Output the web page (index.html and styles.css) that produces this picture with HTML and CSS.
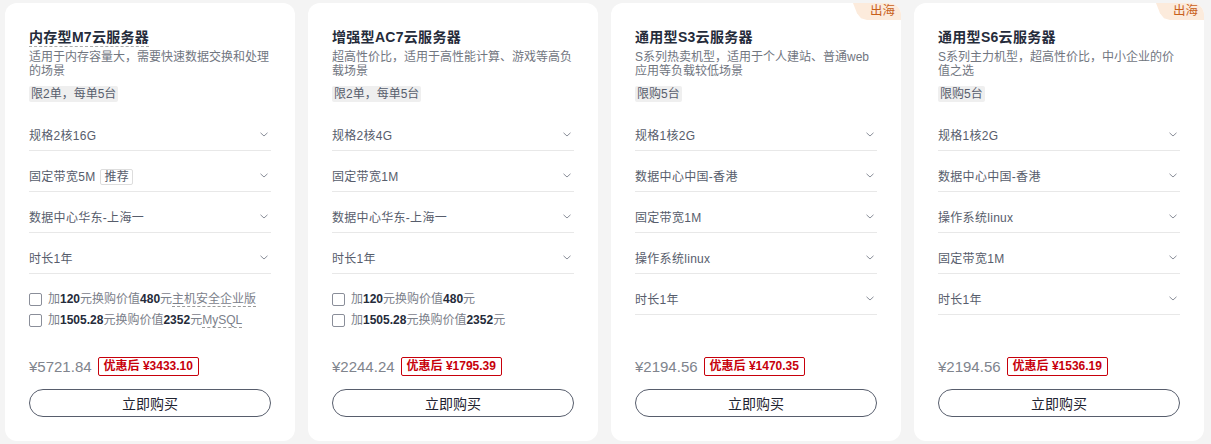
FILE: index.html
```html
<!DOCTYPE html>
<html lang="zh-CN">
<head>
<meta charset="utf-8">
<title>云服务器</title>
<link rel="stylesheet" href="styles.css">
</head>
<body>
<div class="cards">
  <div class="card">
    <div class="title"><span class="dashed">内存型M7云服务器</span></div>
    <div class="desc">适用于内存容量大，需要快速数据交换和处理的场景</div>
    <div class="tag-row"><span class="tag">限2单，每单5台</span></div>
    <div class="opts">
      <div class="opt"><span class="label">规格2核16G</span><svg class="chev" viewBox="0 0 8 5"><path d="M0.5 0.8 L4 4 L7.5 0.8"/></svg></div>
      <div class="opt"><span class="label">固定带宽5M<span class="rec">推荐</span></span><svg class="chev" viewBox="0 0 8 5"><path d="M0.5 0.8 L4 4 L7.5 0.8"/></svg></div>
      <div class="opt"><span class="label">数据中心华东-上海一</span><svg class="chev" viewBox="0 0 8 5"><path d="M0.5 0.8 L4 4 L7.5 0.8"/></svg></div>
      <div class="opt"><span class="label">时长1年</span><svg class="chev" viewBox="0 0 8 5"><path d="M0.5 0.8 L4 4 L7.5 0.8"/></svg></div>
    </div>
    <div class="checks">
      <label class="check"><span class="box"></span>加<b>120</b>元换购价值<b>480</b>元<span class="dash-u">主机安全企业版</span></label>
      <label class="check"><span class="box"></span>加<b>1505.28</b>元换购价值<b>2352</b>元<span class="dash-u">MySQL</span></label>
    </div>
    <div class="price-row"><span class="orig">¥5721.84</span><span class="disc">优惠后 ¥3433.10</span></div>
    <button class="buy">立即购买</button>
  </div>

  <div class="card">
    <div class="title"><span>增强型AC7云服务器</span></div>
    <div class="desc">超高性价比，适用于高性能计算、游戏等高负载场景</div>
    <div class="tag-row"><span class="tag">限2单，每单5台</span></div>
    <div class="opts">
      <div class="opt"><span class="label">规格2核4G</span><svg class="chev" viewBox="0 0 8 5"><path d="M0.5 0.8 L4 4 L7.5 0.8"/></svg></div>
      <div class="opt"><span class="label">固定带宽1M</span><svg class="chev" viewBox="0 0 8 5"><path d="M0.5 0.8 L4 4 L7.5 0.8"/></svg></div>
      <div class="opt"><span class="label">数据中心华东-上海一</span><svg class="chev" viewBox="0 0 8 5"><path d="M0.5 0.8 L4 4 L7.5 0.8"/></svg></div>
      <div class="opt"><span class="label">时长1年</span><svg class="chev" viewBox="0 0 8 5"><path d="M0.5 0.8 L4 4 L7.5 0.8"/></svg></div>
    </div>
    <div class="checks">
      <label class="check"><span class="box"></span>加<b>120</b>元换购价值<b>480</b>元</label>
      <label class="check"><span class="box"></span>加<b>1505.28</b>元换购价值<b>2352</b>元</label>
    </div>
    <div class="price-row"><span class="orig">¥2244.24</span><span class="disc">优惠后 ¥1795.39</span></div>
    <button class="buy">立即购买</button>
  </div>

  <div class="card">
    <span class="corner">出海</span>
    <div class="title"><span>通用型S3云服务器</span></div>
    <div class="desc">S系列热卖机型，适用于个人建站、普通web应用等负载较低场景</div>
    <div class="tag-row"><span class="tag">限购5台</span></div>
    <div class="opts">
      <div class="opt"><span class="label">规格1核2G</span><svg class="chev" viewBox="0 0 8 5"><path d="M0.5 0.8 L4 4 L7.5 0.8"/></svg></div>
      <div class="opt"><span class="label">数据中心中国-香港</span><svg class="chev" viewBox="0 0 8 5"><path d="M0.5 0.8 L4 4 L7.5 0.8"/></svg></div>
      <div class="opt"><span class="label">固定带宽1M</span><svg class="chev" viewBox="0 0 8 5"><path d="M0.5 0.8 L4 4 L7.5 0.8"/></svg></div>
      <div class="opt"><span class="label">操作系统linux</span><svg class="chev" viewBox="0 0 8 5"><path d="M0.5 0.8 L4 4 L7.5 0.8"/></svg></div>
      <div class="opt"><span class="label">时长1年</span><svg class="chev" viewBox="0 0 8 5"><path d="M0.5 0.8 L4 4 L7.5 0.8"/></svg></div>
    </div>
    <div class="price-row"><span class="orig">¥2194.56</span><span class="disc">优惠后 ¥1470.35</span></div>
    <button class="buy">立即购买</button>
  </div>

  <div class="card">
    <span class="corner">出海</span>
    <div class="title"><span>通用型S6云服务器</span></div>
    <div class="desc">S系列主力机型，超高性价比，中小企业的价值之选</div>
    <div class="tag-row"><span class="tag">限购5台</span></div>
    <div class="opts">
      <div class="opt"><span class="label">规格1核2G</span><svg class="chev" viewBox="0 0 8 5"><path d="M0.5 0.8 L4 4 L7.5 0.8"/></svg></div>
      <div class="opt"><span class="label">数据中心中国-香港</span><svg class="chev" viewBox="0 0 8 5"><path d="M0.5 0.8 L4 4 L7.5 0.8"/></svg></div>
      <div class="opt"><span class="label">操作系统linux</span><svg class="chev" viewBox="0 0 8 5"><path d="M0.5 0.8 L4 4 L7.5 0.8"/></svg></div>
      <div class="opt"><span class="label">固定带宽1M</span><svg class="chev" viewBox="0 0 8 5"><path d="M0.5 0.8 L4 4 L7.5 0.8"/></svg></div>
      <div class="opt"><span class="label">时长1年</span><svg class="chev" viewBox="0 0 8 5"><path d="M0.5 0.8 L4 4 L7.5 0.8"/></svg></div>
    </div>
    <div class="price-row"><span class="orig">¥2194.56</span><span class="disc">优惠后 ¥1536.19</span></div>
    <button class="buy">立即购买</button>
  </div>
</div>
</body>
</html>
```
FILE: styles.css
```css
html, body {
  margin: 0;
  padding: 0;
  background: #f4f4f4;
}
body {
  font-family: "Liberation Sans", "Noto Sans CJK SC", sans-serif;
  color: #575d6c;
}
.cards {
  display: flex;
  gap: 13px;
  padding: 3px 0 0 5px;
}
.card {
  position: relative;
  width: 290px;
  height: 438px;
  box-sizing: border-box;
  background: #fff;
  border-radius: 12px;
  padding: 25px 24px 24px;
  display: flex;
  flex-direction: column;
  overflow: hidden;
}
.corner {
  position: absolute;
  top: 0;
  right: 0;
  width: 48px;
  height: 17px;
  background: #fcebdc;
  color: #c8601a;
  font-size: 12.5px;
  line-height: 17px;
  text-align: right;
  padding-right: 6px;
  box-sizing: border-box;
  clip-path: polygon(0 0, 100% 0, 100% 100%, 14px 100%, 8px 90%, 4px 60%);
}
.title {
  font-size: 14px;
  font-weight: bold;
  color: #252b3a;
  line-height: 18px;
  height: 20px;
}
.title span {
  display: inline-block;
  letter-spacing: 0.3px;
}
.title .dashed {
  border-bottom: 1px dashed #aaa;
  line-height: 18px;
}
.desc {
  margin-top: 2px;
  font-size: 12px;
  line-height: 14px;
  color: #71767f;
}
.tag-row {
  margin-top: 6px;
  height: 16px;
}
.tag {
  display: inline-block;
  background: #efefef;
  color: #575d6c;
  font-size: 12px;
  line-height: 16px;
  padding: 0 2px;
  border-radius: 2px;
}
.opts {
  margin-top: 10px;
}
.opt {
  height: 40px;
  border-bottom: 1px solid #e8e8e8;
  display: flex;
  align-items: flex-start;
  justify-content: space-between;
}
.label {
  margin-top: 18px;
  font-size: 12px;
  line-height: 16px;
  color: #575d6c;
  letter-spacing: 0.3px;
  display: flex;
  align-items: center;
}
.rec {
  display: inline-block;
  margin-left: 5px;
  border: 1px solid #ddd;
  border-radius: 2px;
  padding: 0 3px;
  line-height: 14px;
  font-size: 12px;
  color: #575d6c;
}
.chev {
  width: 8px;
  height: 5px;
  margin-top: 22px;
  margin-right: 3px;
  fill: none;
  stroke: #8a8e99;
  stroke-width: 1;
}
.checks {
  margin-top: 17px;
  display: flex;
  flex-direction: column;
  gap: 5px;
}
.check {
  display: flex;
  align-items: center;
  font-size: 12px;
  line-height: 16px;
  color: #7b808a;
}
.check b {
  color: #252b3a;
}
.box {
  width: 11px;
  height: 11px;
  border: 1px solid #8a8e99;
  border-radius: 2px;
  margin-right: 6px;
  flex: none;
}
.dash-u {
  border-bottom: 1px dashed #999;
  line-height: 14px;
}
.price-row {
  margin-top: auto;
  display: flex;
  align-items: center;
  height: 20px;
}
.orig {
  font-size: 15px;
  color: #80848d;
  margin-right: 6px;
}
.disc {
  border: 1px solid #c7000b;
  border-radius: 2px;
  color: #c7000b;
  font-size: 12px;
  font-weight: bold;
  line-height: 17px;
  padding: 0 5px;
}
.buy {
  margin-top: 13px;
  height: 28px;
  width: 100%;
  background: #fff;
  border: 1px solid #575d6c;
  border-radius: 14px;
  font-family: "Liberation Sans", "Noto Sans CJK SC", sans-serif;
  font-size: 14px;
  color: #1f2330;
  padding: 0;
}
```
